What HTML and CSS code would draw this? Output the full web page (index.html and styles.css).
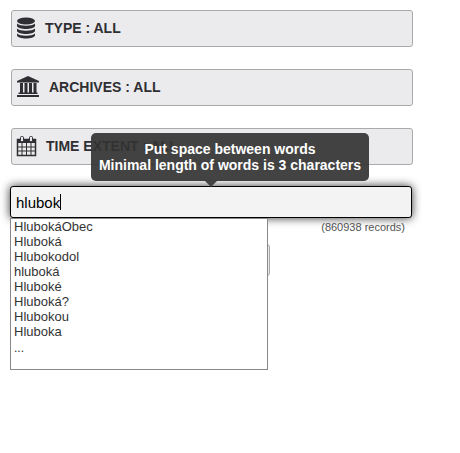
FILE: index.html
```html
<!DOCTYPE html>
<html lang="en">

<head>
    <meta charset="UTF-8">
    <meta name="viewport" content="width=device-width, initial-scale=1.0">
    <title>Search</title>
    <link rel="stylesheet" href="styles.css">
</head>

<body>
    <form class="search-panel">
        <div class="facets">
            <button type="button" class="facet">
                <svg width="20" height="22" viewBox="0 0 20 22" fill="currentColor">
                    <ellipse cx="10" cy="4" rx="9" ry="3.500" />
                    <path d="M1 6.500c3 3 15 3 18 0v2.500c-1 4-17 4-18 0z" />
                    <path d="M1 11.500c3 3 15 3 18 0v2.500c-1 4-17 4-18 0z" />
                    <path d="M1 16.500c3 3 15 3 18 0v2c-1 4-17 4-18 0z" />
                </svg>
                <span>TYPE : ALL</span>
            </button>
            <button type="button" class="facet">
                <svg width="24" height="22" viewBox="0 0 24 22" fill="currentColor">
                    <path d="M12 0L23 5v1.500H1V5z" />
                    <path d="M4 7h3v10H4zM8.500 7h3v10h-3zM13 7h3v10h-3zM17.500 7h3v10h-3z" />
                    <path d="M2.500 16.500h19V18h-19zM1 19h22v2H1z" />
                </svg>
                <span>ARCHIVES : ALL</span>
            </button>
            <button type="button" class="facet">
                <svg width="21" height="22" viewBox="0 0 21 22" fill="none" stroke="currentColor">
                    <rect x="1.500" y="4.500" width="18" height="16" stroke-width="1.500" />
                    <path d="M1 4h19v4H1z" fill="currentColor" stroke="none" />
                    <path d="M6 8v12.500M10.500 8v12.500M15 8v12.500M1.500 12h18M1.500 16h18" />
                    <rect x="4.500" y="1.500" width="3" height="5" rx="1" fill="#ebebed" />
                    <rect x="13.500" y="1.500" width="3" height="5" rx="1" fill="#ebebed" />
                </svg>
                <span>TIME EXTENT : ALL</span>
            </button>
        </div>

        <div class="search-field">
            <div class="tooltip" id="search-hint" role="tooltip">
                Put space between words<br>Minimal length of words is 3 characters
            </div>
            <input type="text" class="search-input" id="search" value="hlubok" aria-label="Search"
                aria-describedby="search-hint" autocomplete="off">
            <span class="caret"></span>
            <ul class="suggestions">
                <li>HlubokáObec</li>
                <li>Hluboká</li>
                <li>Hlubokodol</li>
                <li>hluboká</li>
                <li>Hluboké</li>
                <li>Hluboká?</li>
                <li>Hlubokou</li>
                <li>Hluboka</li>
                <li class="more">...</li>
            </ul>
        </div>

        <p class="records">(860938 records)</p>
        <button type="submit" class="submit" aria-label="Search"></button>
    </form>
</body>

</html>
```
FILE: styles.css
```css
body {
    min-height: 100vh;
    margin: 0;
    background-color: #fff;
    color: #333;
    font-family: Arial, "Liberation Sans", sans-serif;
}

.search-panel {
    padding: 10px 48px 10px 10px;
}

.facets {
    display: flex;
    flex-direction: column;
    gap: 22px;
    margin: 0 -1px 21px 1px;
}

.facet {
    display: flex;
    align-items: center;
    gap: 9px;
    box-sizing: border-box;
    height: 37px;
    padding: 0 4px 2px;
    border: 1px solid #aaa;
    border-radius: 3px;
    background-color: #ebebed;
    color: #2f2f33;
    font-family: inherit;
    font-size: 14px;
    font-weight: bold;
    cursor: pointer;
}

.search-field {
    position: relative;
}

.search-input {
    display: block;
    box-sizing: border-box;
    width: 100%;
    height: 32px;
    padding: 0 5px;
    border: 1px solid #000;
    border-radius: 3px;
    outline: none;
    background-color: #f3f3f3;
    box-shadow: 0 0 10px #333;
    color: #000;
    font-family: inherit;
    font-size: 15px;
    caret-color: transparent;
}

.caret {
    position: absolute;
    top: 8px;
    left: 50px;
    width: 1px;
    height: 16px;
    background-color: #000;
}

.tooltip {
    position: absolute;
    bottom: calc(100% + 5px);
    left: 50%;
    z-index: 2;
    box-sizing: border-box;
    width: 278px;
    margin-left: -120px;
    padding: 8px 0;
    border-radius: 5px;
    background-color: rgba(51, 51, 51, 0.92);
    color: #fff;
    font-size: 14px;
    font-weight: bold;
    line-height: 16px;
    text-align: center;
}

.tooltip::after {
    content: "";
    position: absolute;
    top: 100%;
    left: 114px;
    border: 6px solid transparent;
    border-top-color: #444;
    border-bottom: 0;
}

.suggestions {
    position: absolute;
    top: 100%;
    left: 0;
    z-index: 1;
    box-sizing: border-box;
    width: 258px;
    height: 152px;
    margin: 0;
    padding: 0 3px;
    border: 1px solid #888;
    background-color: #fff;
    font-size: 13px;
    line-height: 15px;
    list-style: none;
}

.suggestions .more {
    font-size: 12px;
    line-height: 18px;
}

.records {
    margin: 3px 7px 0 0;
    color: #555;
    font-size: 11px;
    line-height: 13px;
    text-align: right;
}

.submit {
    display: block;
    width: 80px;
    height: 32px;
    margin: 10px 0 0 180px;
    border: 1px solid #aaa;
    border-radius: 3px;
    background-color: #ebebed;
}
```
